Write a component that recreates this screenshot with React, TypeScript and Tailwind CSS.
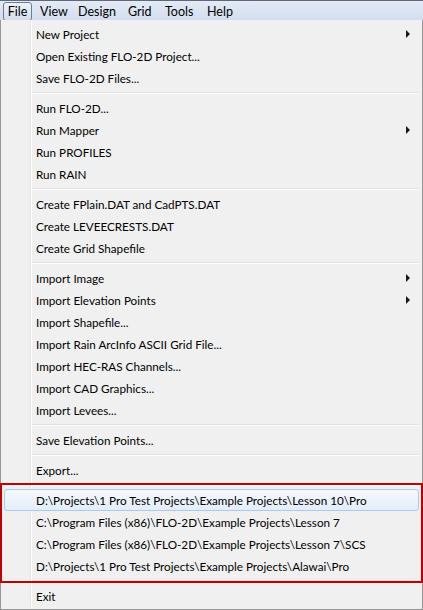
import React from "react";

type Item = { label: string; sub?: boolean; hl?: boolean };

const groups: Item[][] = [
  [{ label: "New Project", sub: true }, { label: "Open Existing FLO-2D Project..." }, { label: "Save FLO-2D Files..." }],
  [{ label: "Run FLO-2D..." }, { label: "Run Mapper", sub: true }, { label: "Run PROFILES" }, { label: "Run RAIN" }],
  [{ label: "Create FPlain.DAT and CadPTS.DAT" }, { label: "Create LEVEECRESTS.DAT" }, { label: "Create Grid Shapefile" }],
  [
    { label: "Import Image", sub: true },
    { label: "Import Elevation Points", sub: true },
    { label: "Import Shapefile..." },
    { label: "Import Rain ArcInfo ASCII Grid File..." },
    { label: "Import HEC-RAS Channels..." },
    { label: "Import CAD Graphics..." },
    { label: "Import Levees..." },
  ],
  [{ label: "Save Elevation Points..." }],
  [{ label: "Export..." }],
];

const recent: Item[] = [
  { label: "D:\\Projects\\1 Pro Test Projects\\Example Projects\\Lesson 10\\Pro", hl: true },
  { label: "C:\\Program Files (x86)\\FLO-2D\\Example Projects\\Lesson 7" },
  { label: "C:\\Program Files (x86)\\FLO-2D\\Example Projects\\Lesson 7\\SCS" },
  { label: "D:\\Projects\\1 Pro Test Projects\\Example Projects\\Alawai\\Pro" },
];

function Row({ item }: { item: Item }) {
  return (
    <div className="relative h-[22px] flex items-center pl-[35px] pt-[1px]">
      {item.hl && (
        <div className="absolute left-[3px] right-[3px] top-0 bottom-0 rounded-[3px] border border-[#a8cbf2] bg-gradient-to-b from-[#f5f9fe] to-[#e3edf9]" />
      )}
      <span className="relative whitespace-nowrap">{item.label}</span>
      {item.sub && (
        <svg className="absolute right-[12px] top-[7px]" width="4" height="8" viewBox="0 0 4 8">
          <path d="M0 0 L4 4 L0 8 Z" fill="#1a1a1a" />
        </svg>
      )}
    </div>
  );
}

function Sep() {
  return (
    <div className="h-[8px] flex flex-col justify-center pl-[31px] pr-[3px]">
      <div className="h-px bg-[#e0e0e0]" />
      <div className="h-px bg-white" />
    </div>
  );
}

export default function App() {
  return (
    <div
      className="w-[423px] h-[610px] bg-white text-[11.7px] text-black overflow-hidden relative"
      style={{ fontFamily: 'Lato, "Noto Sans", sans-serif' }}
    >
      {/* menu bar */}
      <div className="h-[20px] border-t border-[#5c6a7a] bg-gradient-to-b from-[#e4ebf6] to-[#d3ddef] flex items-center">
        <div className="ml-[3px] w-[29px] h-[19px] mt-px pt-[2px] flex items-center justify-center rounded-[3px] border border-[#6f7c8c] bg-gradient-to-b from-[#eef2f8] to-[#d6deeb] text-[12.5px]">
          File
        </div>
        <div className="flex items-center ml-[8px] pt-[3px] text-[12.5px]">
          <span className="inline-block w-[38px] shrink-0">View</span>
          <span className="inline-block w-[50px] shrink-0">Design</span>
          <span className="inline-block w-[37px] shrink-0">Grid</span>
          <span className="inline-block w-[42px] shrink-0">Tools</span>
          <span>Help</span>
        </div>
      </div>
      {/* dropdown */}
      <div className="relative w-[423px] h-[590px] bg-[#f0f0f0] border border-t-0 border-[#979797]">
        <div className="absolute left-[29px] top-[2px] bottom-[2px] w-px bg-[#e2e3e3]" />
        <div className="absolute left-[30px] top-[2px] bottom-[2px] w-px bg-white" />
        <div className="relative pt-[3px]">
          {groups.map((g, gi) => (
            <div key={gi}>
              {g.map((it) => (
                <Row key={it.label} item={it} />
              ))}
              <Sep />
            </div>
          ))}
          <div className="relative">
            {recent.map((it) => (
              <Row key={it.label} item={it} />
            ))}
            <div className="absolute left-[-1px] right-[-1px] top-[-6px] bottom-[-6px] border-2 border-[#c00000]" />
          </div>
          <Sep />
          <Row item={{ label: "Exit" }} />
        </div>
      </div>
    </div>
  );
}
